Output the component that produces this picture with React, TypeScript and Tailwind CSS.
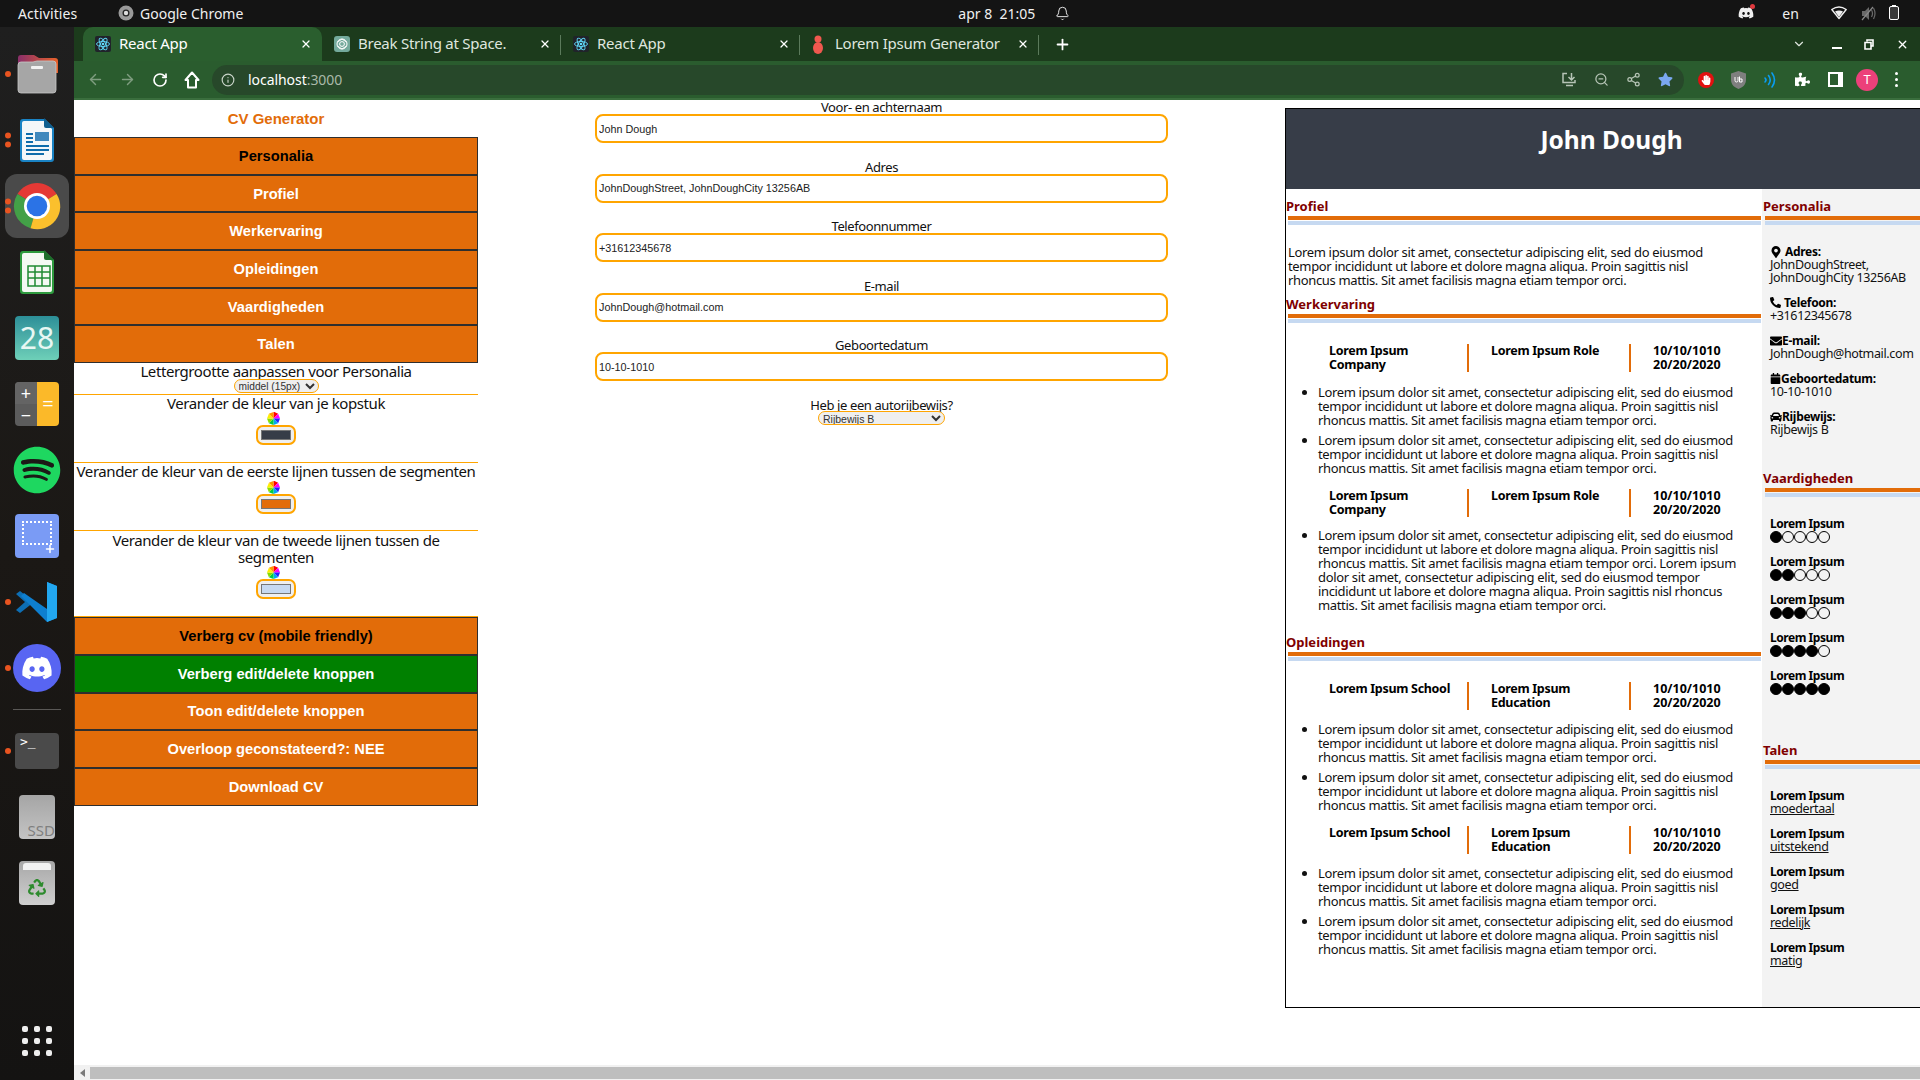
import React from "react";
import { FaMapMarkerAlt, FaPhoneAlt, FaEnvelope, FaCalendar, FaCar, FaDiscord, FaSpotify, FaRecycle, FaPuzzlePiece, FaStar, FaHandPaper } from "react-icons/fa";
import { Info, RotateCw, ArrowLeft, ArrowRight, ZoomOut, Share2, ChevronDown, Plus, X, Bell } from "lucide-react";

const LOREM = "Lorem ipsum dolor sit amet, consectetur adipiscing elit, sed do eiusmod tempor incididunt ut labore et dolore magna aliqua. Proin sagittis nisl rhoncus mattis. Sit amet facilisis magna etiam tempor orci.";

function ReactFav() {
  return (
    <svg width="16" height="16" viewBox="0 0 16 16" className="shrink-0">
      <rect width="16" height="16" rx="2" fill="#20232a" />
      <g fill="none" stroke="#61dafb" strokeWidth="0.9">
        <ellipse cx="8" cy="8" rx="6.500" ry="2.500" />
        <ellipse cx="8" cy="8" rx="6.500" ry="2.500" transform="rotate(60 8 8)" />
        <ellipse cx="8" cy="8" rx="6.500" ry="2.500" transform="rotate(120 8 8)" />
      </g>
      <circle cx="8" cy="8" r="1.3" fill="#61dafb" />
    </svg>
  );
}
function GptFav() {
  return (
    <svg width="16" height="16" viewBox="0 0 16 16" className="shrink-0">
      <rect width="16" height="16" rx="3" fill="#74aa9c" />
      <g fill="none" stroke="#fff" strokeWidth="1">
        <circle cx="8" cy="8" r="5" />
        <circle cx="8" cy="8" r="2.4" />
        <path d="M3.5 6 8 3l4.500 3M12.500 10 8 13l-4.500-3" />
      </g>
    </svg>
  );
}
function LoremFav() {
  return (
    <svg width="12" height="22" viewBox="0 0 12 22" className="mr-[3px] shrink-0">
      <circle cx="6" cy="6" r="3.500" fill="#f0584f" />
      <ellipse cx="6" cy="15" rx="5" ry="6" fill="#f0584f" />
    </svg>
  );
}

function Tab({ icon, title, active, sep }: { icon: React.ReactNode; title: string; active?: boolean; sep?: boolean }) {
  return (
    <div className={`relative flex h-[34px] w-[239px] shrink-0 items-center pl-[12px] pr-[10px] ${active ? "rounded-t-[10px] bg-[#2a5e2e]" : ""}`}>
      {icon}
      <span className={`ml-[8px] flex-1 truncate pb-[2px] text-[15px] tracking-[-0.25px] ${active ? "text-white" : "text-[#dfe6df]"}`}>{title}</span>
      <X size={12} strokeWidth={2.5} className="shrink-0 text-white" />
      {sep && <span className="absolute right-0 top-[8px] h-[20px] w-px bg-[#5b7a5b]" />}
    </div>
  );
}

function Dock() {
  const Slot = ({ children, dots = 0 }: { children: React.ReactNode; dots?: number }) => (
    <div className="relative flex h-[66px] w-full shrink-0 items-center justify-center">
      {dots > 0 && (
        <div className="absolute left-[5px] top-1/2 flex -translate-y-1/2 flex-col gap-[3px]">
          {Array.from({ length: dots }).map((_, i) => (
            <span key={i} className="h-[6px] w-[6px] rounded-full bg-[#e95420]" />
          ))}
        </div>
      )}
      {children}
    </div>
  );
  return (
    <div className="flex w-[74px] shrink-0 flex-col items-center bg-gradient-to-b from-[#1f1f1f] via-[#1b1815] to-[#141312] pt-[14px]">
      <Slot dots={1}>
        <svg width="46" height="42" viewBox="0 0 46 42">
          <defs>
            <linearGradient id="folderTop" x1="0" y1="0" x2="1" y2="0">
              <stop offset="0" stopColor="#8a2f6a" />
              <stop offset="1" stopColor="#e8622a" />
            </linearGradient>
          </defs>
          <path d="M4 5a3 3 0 0 1 3-3h13l5 3h16a3 3 0 0 1 3 3v12H4z" fill="url(#folderTop)" />
          <path d="M4 12a3 3 0 0 1 3-3h12l4-1h16a3 3 0 0 1 3 3v26a3 3 0 0 1-3 3H7a3 3 0 0 1-3-3z" fill="#a6a6a6" stroke="#c8c8c8" strokeWidth="0.8" />
          <rect x="17" y="13" width="12" height="3" rx="1" fill="#f2f2f2" />
        </svg>
      </Slot>
      <Slot dots={2}>
        <svg width="44" height="46" viewBox="0 0 44 46">
          <path d="M5 5a3 3 0 0 1 3-3h22l9 9v31a3 3 0 0 1-3 3H8a3 3 0 0 1-3-3z" fill="#1a83c4" />
          <path d="M7 6a2 2 0 0 1 2-2h20l8 8v29a2 2 0 0 1-2 2H9a2 2 0 0 1-2-2z" fill="#f4f7f9" />
          <path d="M29 1l10 10h-8a2 2 0 0 1-2-2z" fill="#0f5f90" />
          <rect x="20" y="15" width="14" height="9" fill="#3f88bd" />
          <g fill="#0f6cab">
            <rect x="11" y="16" width="7" height="2" />
            <rect x="11" y="20" width="7" height="2" />
            <rect x="11" y="24" width="7" height="2" />
            <rect x="11" y="28" width="23" height="2" />
            <rect x="11" y="32" width="23" height="2" />
            <rect x="11" y="36" width="18" height="2" />
          </g>
        </svg>
      </Slot>
      <Slot dots={2}>
        <div className="flex h-[64px] w-[64px] items-center justify-center rounded-[12px] bg-[#4a4a4a]">
          <svg width="52" height="52" viewBox="0 0 48 48">
            <path d="M24 24 6 13A21 21 0 0 1 42 13z" fill="#e53935" />
            <path d="M24 24 6 13A21 21 0 0 0 18 44.500z" fill="#43a047" />
            <path d="M24 24 42 13A21 21 0 0 1 18 44.500z" fill="#fbc02d" />
            <circle cx="24" cy="24" r="12" fill="#fff" />
            <circle cx="24" cy="24" r="9.500" fill="#2b73e6" />
          </svg>
        </div>
      </Slot>
      <Slot>
        <svg width="44" height="46" viewBox="0 0 44 46">
          <path d="M5 5a3 3 0 0 1 3-3h22l9 9v31a3 3 0 0 1-3 3H8a3 3 0 0 1-3-3z" fill="#2e9a3e" />
          <path d="M7 6a2 2 0 0 1 2-2h20l8 8v29a2 2 0 0 1-2 2H9a2 2 0 0 1-2-2z" fill="#f4f9f3" />
          <path d="M29 1l10 10h-8a2 2 0 0 1-2-2z" fill="#1c6e2a" />
          <g fill="none" stroke="#1f8a33" strokeWidth="1.500">
            <rect x="13" y="17" width="22" height="20" />
            <path d="M13 23h22M13 29h22M20 17v20M27 17v20" />
          </g>
        </svg>
      </Slot>
      <Slot>
        <div className="relative flex h-[44px] w-[44px] items-center justify-center rounded-[4px] bg-gradient-to-b from-[#2c8f98] to-[#6ed0b8] text-[30px] leading-none text-[#e8f7f3] [font-family:'Noto_Sans',sans-serif]">
          28
        </div>
      </Slot>
      <Slot>
        <div className="flex h-[44px] w-[44px] overflow-hidden rounded-[4px]">
          <div className="flex w-1/2 flex-col bg-[#5c5c5c] text-center text-[18px] leading-[22px] text-white">
            <span className="h-[22px] bg-[#646464]">+</span>
            <span>−</span>
          </div>
          <div className="flex w-1/2 items-center justify-center bg-[#fbb929] text-[20px] text-white">=</div>
        </div>
      </Slot>
      <Slot>
        <FaSpotify size={48} className="text-[#1ed760]" />
      </Slot>
      <Slot>
        <div className="relative h-[44px] w-[44px] rounded-[4px] bg-[#7a9bf5]">
          <div className="absolute left-[7px] top-[7px] h-[24px] w-[30px] border-2 border-dotted border-white" />
          <Plus size={12} strokeWidth={3} className="absolute bottom-[3px] right-[3px] text-white" />
        </div>
      </Slot>
      <Slot dots={1}>
        <svg width="44" height="42" viewBox="0 0 44 42">
          <path d="M1 13 5 10 19 21 5 32 1 29l9-8z" fill="#0d6eb4" />
          <path d="M32 1 42 5v32l-10 4L6 15l3-3 23 16z" fill="#0e7fd0" />
          <path d="M32 1 42 5v32l-10 4z" fill="#22a7f0" />
        </svg>
      </Slot>
      <Slot dots={1}>
        <div className="flex h-[48px] w-[48px] items-center justify-center rounded-full bg-[#5865f2]">
          <FaDiscord size={32} className="text-white" />
        </div>
      </Slot>
      <div className="flex h-[17px] w-full shrink-0 items-center justify-center">
        <div className="h-px w-[48px] bg-[#5a5856]" />
      </div>
      <Slot dots={1}>
        <div className="relative h-[36px] w-[44px] rounded-[4px] bg-[#4a4a4a] pl-[5px] text-[13px] leading-[18px] text-white [font-family:'DejaVu_Sans_Mono',monospace]">
          &gt;_
        </div>
      </Slot>
      <Slot>
        <div className="flex h-[44px] w-[36px] items-end justify-end overflow-hidden rounded-[4px] bg-gradient-to-b from-[#a5a5a5] to-[#c4c4c4] text-[15px] leading-[18px] text-[#7f7f7f]">
          SSD
        </div>
      </Slot>
      <Slot>
        <div className="flex h-[44px] w-[36px] flex-col items-center rounded-[4px] bg-gradient-to-b from-[#a8a8a8] to-[#cfcfcf] pt-[2px]">
          <div className="h-[7px] w-[28px] rounded-t-[3px] bg-[#f2f2f2]" />
          <FaRecycle size={18} className="mt-[9px] text-[#2e8b2e]" />
        </div>
      </Slot>
      <div className="mt-auto mb-[24px] grid grid-cols-3 gap-[6px]">
        {Array.from({ length: 9 }).map((_, i) => (
          <span key={i} className="h-[6px] w-[6px] rounded-[2px] bg-[#eeeeee]" />
        ))}
      </div>
    </div>
  );
}

function TopBar() {
  return (
    <div className="relative flex h-[27px] shrink-0 items-center bg-[#141414] pb-[1px] text-[14px] text-[#f0f0f0]">
      <span className="ml-[18px] w-[63px] whitespace-nowrap tracking-[0.1px]">Activities</span>
      <svg width="16" height="16" viewBox="0 0 16 16" className="ml-[37px]">
        <circle cx="8" cy="8" r="7.500" fill="#9a9a9a" />
        <circle cx="8" cy="8" r="3.500" fill="#222" />
        <circle cx="8" cy="8" r="2.200" fill="#ddd" />
      </svg>
      <span className="ml-[6px]">Google Chrome</span>
      <span className="ml-[715px] w-[76px] whitespace-nowrap">apr 8&nbsp; 21:05</span>
      <Bell size={15} strokeWidth={1.500} className="ml-[21px]" />
      <div className="relative ml-[668px]">
        <FaDiscord size={16} />
        <span className="absolute -right-[1px] -top-[1px] h-[5px] w-[5px] rounded-full bg-[#e0393e]" />
      </div>
      <span className="ml-[28px]">en</span>
      <svg width="16" height="14" viewBox="0 0 16 14" className="ml-[32px]">
        <path d="M.8 3.500Q8-1.500 15.200 3.500L8 12.500z" fill="none" stroke="#f0f0f0" strokeWidth="1.400" strokeLinejoin="round" />
        <path d="M4 5.500Q8 3.500 12 5.500L8 11z" fill="#f0f0f0" />
      </svg>
      <svg width="15" height="15" viewBox="0 0 15 15" className="ml-[14px]">
        <path d="M1 5h3l4-4v13l-4-4H1z" fill="#6a6a6a" />
        <path d="M10.500 4q2 3.500 0 7M12.500 2q3 5.500 0 11" fill="none" stroke="#6a6a6a" strokeWidth="1.200" />
        <path d="M1 14 12 1" stroke="#8a8a8a" strokeWidth="1.200" />
      </svg>
      <div className="relative ml-[13px] h-[14px] w-[10px] rounded-[2px] border border-white bg-[#3a3a3a]">
        <span className="absolute -top-[2px] left-[2px] h-[1px] w-[4px] bg-white" />
      </div>
    </div>
  );
}

function Toolbar() {
  return (
    <div className="flex h-[39px] shrink-0 items-center border-b-2 border-[#3a6e3d] bg-[#2a5c2e]">
      <ArrowLeft size={17} className="ml-[13px] text-[#7f9d80]" />
      <ArrowRight size={17} className="ml-[15px] text-[#7f9d80]" />
      <RotateCw size={16} strokeWidth={2.500} className="ml-[16px] text-white" />
      <svg width="16" height="18" viewBox="0 0 16 18" className="ml-[16px]">
        <path d="M8 1.500 1.500 9H4v7.500h8V9h2.500z" fill="none" stroke="#fff" strokeWidth="2" strokeLinejoin="round" />
      </svg>
      <div className="ml-[12px] flex h-[30px] w-[1472px] items-center rounded-full bg-[#27482a] pl-[9px]">
        <Info size={14} className="text-[#c9d4c9]" />
        <span className="ml-[13px] pb-[1px] text-[14px] tracking-[-0.05px] text-white">
          localhost<span className="text-[#a9b9a9]">:3000</span>
        </span>
        <svg width="15" height="15" viewBox="0 0 15 15" className="ml-auto">
          <path d="M5 1.500H1v9h12V8M9.500 1v6.500M6.500 5l3 3 3-3M4 13.500h7" fill="none" stroke="#b6c4b6" strokeWidth="1.500" />
        </svg>
        <ZoomOut size={15} className="ml-[17px] text-[#b6c4b6]" />
        <Share2 size={15} className="ml-[17px] text-[#b6c4b6]" />
        <FaStar size={15} className="ml-[17px] mr-[11px] text-[#7aa7f0]" />
      </div>
      <div className="ml-[14px] flex h-[16px] w-[16px] items-center justify-center rounded-full bg-[#e21010]">
        <FaHandPaper size={10} className="text-white" />
      </div>
      <svg width="15" height="18" viewBox="0 0 15 18" className="ml-[17px]">
        <path d="M7.500 0 15 2.500V9c0 4.500-3.500 7.500-7.500 9C3.500 16.500 0 13.500 0 9V2.500z" fill="#7f7f7f" />
        <path d="M4 6v3.500a1.500 1.500 0 0 0 3 0V6M8.500 5.500v5.500M8.500 8h2.500v3H8.500" fill="none" stroke="#fff" strokeWidth="1" />
      </svg>
      <svg width="14" height="18" viewBox="0 0 14 18" className="ml-[17px]">
        <g fill="none" stroke="#0a9cf0" strokeWidth="1.600" strokeLinecap="round">
          <path d="M2 7q2 2 0 4" />
          <path d="M5.500 4.500q3.500 4.500 0 9" />
          <path d="M9 2q5 7 0 14" />
        </g>
      </svg>
      <FaPuzzlePiece size={15} className="ml-[18px] text-white" />
      <div className="ml-[18px] flex h-[15px] w-[15px] justify-end border-2 border-white">
        <span className="h-full w-[3px] bg-white" />
      </div>
      <div className="ml-[13px] flex h-[22px] w-[22px] items-center justify-center rounded-full bg-[#ec407a] text-[13px] text-white">T</div>
      <div className="ml-[17px] flex flex-col gap-[3px]">
        <span className="h-[3px] w-[3px] rounded-full bg-white" />
        <span className="h-[3px] w-[3px] rounded-full bg-white" />
        <span className="h-[3px] w-[3px] rounded-full bg-white" />
      </div>
    </div>
  );
}

function SideButton({ label, dark, green }: { label: string; dark?: boolean; green?: boolean }) {
  return (
    <div className={`flex h-[37.7px] items-center justify-center border border-[#2e2e2e] text-[14.700px] font-bold ${green ? "bg-[#008000]" : "bg-[#e26c09]"} ${dark ? "text-black" : "text-white"} [font-family:'Liberation_Sans',sans-serif]`}>
      {label}
    </div>
  );
}

function ColorPick({ color, className = "" }: { color: string; className?: string }) {
  return (
    <div className={`flex flex-col items-center ${className}`}>
      <svg width="13" height="13" viewBox="0 0 14 14" className="-ml-[6px]">
        <path d="M7 7V0h1l4 2z" fill="#ff0000" />
        <path d="M7 7l5-5 2 5z" fill="#ff00ff" />
        <path d="M7 7h7l-2 5z" fill="#2222ff" />
        <path d="M7 7l5 5-5 2z" fill="#00aaee" />
        <path d="M7 7v7l-5-2z" fill="#00cc44" />
        <path d="M7 7l-5 5-2-5z" fill="#88dd00" />
        <path d="M7 7H0l2-5z" fill="#ffee00" />
        <path d="M7 7 2 2l5-2z" fill="#ff9900" />
      </svg>
      <div className="flex h-[20px] w-[40px] items-center justify-center rounded-[7px] border-2 border-[#ffa500] bg-[#efefef]">
        <div className="h-[10px] w-[30px] border border-[#767676]" style={{ backgroundColor: color }} />
      </div>
    </div>
  );
}

function LeftPanel() {
  const label = "text-center text-[15px] leading-[17px] tracking-[-0.42px] text-[#111] [font-family:'Noto_Sans',sans-serif]";
  return (
    <div className="w-[404px] shrink-0">
      <div className="flex h-[37px] items-center justify-center pt-[1px] text-[15px] font-bold text-[#e26c09] [font-family:'Liberation_Sans',sans-serif]">CV Generator</div>
      <SideButton label="Personalia" dark />
      <SideButton label="Profiel" />
      <SideButton label="Werkervaring" />
      <SideButton label="Opleidingen" />
      <SideButton label="Vaardigheden" />
      <SideButton label="Talen" />
      <div className="flex h-[32px] flex-col items-center border-b border-[#ffa500]">
        <div className={label}>Lettergrootte aanpassen voor Personalia</div>
        <select defaultValue="m" className="-mt-[1px] h-[14px] w-[85px] rounded-full border border-[#ffa500] bg-[#efefef] text-[10.200px] leading-[12px] text-[#333] [font-family:'Liberation_Sans',sans-serif]">
          <option value="m">middel (15px)</option>
        </select>
      </div>
      <div className="flex h-[68px] flex-col items-center border-b border-[#ffa500]">
        <div className={label}>Verander de kleur van je kopstuk</div>
        <ColorPick color="#373d48" />
      </div>
      <div className="flex h-[68px] flex-col items-center border-b border-[#ffa500]">
        <div className={label}>Verander de kleur van de eerste lijnen tussen de segmenten</div>
        <ColorPick color="#e26c09" className="mt-[1px]" />
      </div>
      <div className="flex h-[86px] flex-col items-center border-b border-[#ffa500] pt-[1px]">
        <div className={label}>Verander de kleur van de tweede lijnen tussen de<br />segmenten</div>
        <ColorPick color="#c6d9f1" />
      </div>
      <SideButton label="Verberg cv (mobile friendly)" dark />
      <SideButton label="Verberg edit/delete knoppen" green />
      <SideButton label="Toon edit/delete knoppen" />
      <SideButton label="Overloop geconstateerd?: NEE" />
      <SideButton label="Download CV" />
    </div>
  );
}

const formLabel = "h-[14px] text-center text-[13px] leading-[14px] tracking-[-0.4px] text-[#111] [font-family:'Noto_Sans',sans-serif]";

function Field({ label, value }: { label: string; value: string }) {
  return (
    <div className="mb-[16.500px] flex flex-col items-center">
      <div className={formLabel}>{label}</div>
      <input readOnly value={value} className="h-[29px] w-full rounded-[8px] border-2 border-[#ffa500] px-[2px] text-[10.800px] text-[#222] [font-family:'Liberation_Sans',sans-serif]" />
    </div>
  );
}

function FormPanel() {
  return (
    <div className="ml-[117px] w-[573px] shrink-0">
      <Field label="Voor- en achternaam" value="John Dough" />
      <Field label="Adres" value="JohnDoughStreet, JohnDoughCity 13256AB" />
      <Field label="Telefoonnummer" value="+31612345678" />
      <Field label="E-mail" value="JohnDough@hotmail.com" />
      <Field label="Geboortedatum" value="10-10-1010" />
      <div className="flex flex-col items-center">
        <div className={formLabel}>Heb je een autorijbewijs?</div>
        <select defaultValue="b" className="-mt-[1px] h-[14px] w-[127px] rounded-full border border-[#ffa500] bg-[#efefef] text-[10.500px] leading-[12px] text-[#333] [font-family:'Liberation_Sans',sans-serif]">
          <option value="b">Rijbewijs B</option>
        </select>
      </div>
    </div>
  );
}

function SectionHead({ title, className = "" }: { title: string; className?: string }) {
  return (
    <div className={className}>
      <div className="h-[14px] text-[13px] font-bold leading-[14px] text-[#800000]">{title}</div>
      <div className="ml-[2px] mt-[3px] h-[4px] bg-[#e26c09]" />
      <div className="ml-[2px] mt-[1px] h-[4px] bg-[#c6d9f1]" />
    </div>
  );
}

function Entry({ a, b, className = "" }: { a: React.ReactNode; b: React.ReactNode; className?: string }) {
  return (
    <div className={`ml-[19px] flex h-[28px] text-[12.500px] font-bold leading-[14px] text-black ${className}`}>
      <div className="w-[162px] pl-[24px] tracking-[-0.3px]">{a}</div>
      <div className="w-[162px] border-l-2 border-[#e26c09] pl-[22px] tracking-[-0.3px]">{b}</div>
      <div className="w-[130px] border-l-2 border-[#e26c09] pl-[22px]">10/10/1010<br />20/20/2020</div>
    </div>
  );
}

function Bullets({ items, className = "" }: { items: string[]; className?: string }) {
  return (
    <ul className={`ml-[32px] mr-[20px] flex list-disc flex-col gap-[6px] text-[13px] leading-[14px] tracking-[-0.34px] text-[#111] ${className}`}>
      {items.map((t, i) => (
        <li key={i}>{t}</li>
      ))}
    </ul>
  );
}

function Info2({ icon, label, children }: { icon: React.ReactNode; label: string; children: React.ReactNode }) {
  return (
    <div className="mb-[12px] text-[12.500px] leading-[13px] tracking-[-0.36px] text-[#111]">
      <div className="flex items-center text-[12px] font-bold tracking-[-0.3px] text-black">
        {icon}
        {label}
      </div>
      {children}
    </div>
  );
}

function Skill({ n }: { n: number }) {
  return (
    <div className="mb-[12px] text-[12px] font-bold leading-[13px] tracking-[-0.45px] text-black">
      Lorem Ipsum
      <div className="flex h-[13px] items-center">
        {[0, 1, 2, 3, 4].map((i) => (
          <span key={i} className={`h-[12px] w-[12px] rounded-full border border-black ${i < n ? "bg-black" : "bg-transparent"}`} />
        ))}
      </div>
    </div>
  );
}

function Lang({ v }: { v: string }) {
  return (
    <div className="mb-[12px] text-[12.500px] leading-[13px] tracking-[-0.36px] text-[#111]">
      <div className="text-[12px] font-bold tracking-[-0.45px] text-black">Lorem Ipsum</div>
      <div className="underline">{v}</div>
    </div>
  );
}

function CV() {
  return (
    <div className="ml-[117px] mt-[8px] flex h-[900px] w-[652px] shrink-0 flex-col border-y border-l border-black [font-family:'Noto_Sans',sans-serif]">
      <div className="h-[80px] shrink-0 bg-[#373d48] pt-[14px] text-center text-[24.500px] font-bold leading-[34px] text-white">John Dough</div>
      <div className="flex min-h-0 flex-1">
        <div className="w-[476px] shrink-0 pr-[1px]">
          <SectionHead title="Profiel" className="mt-[10px]" />
          <p className="ml-[2px] mr-[30px] mt-[20px] text-[13px] leading-[14px] tracking-[-0.34px] text-[#111]">{LOREM}</p>
          <SectionHead title="Werkervaring" className="mt-[10px]" />
          <Entry className="mt-[21px]" a={<>Lorem Ipsum<br />Company</>} b="Lorem Ipsum Role" />
          <Bullets className="mt-[13px]" items={[LOREM, LOREM]} />
          <Entry className="mt-[14px]" a={<>Lorem Ipsum<br />Company</>} b="Lorem Ipsum Role" />
          <Bullets className="mt-[11px]" items={[LOREM + " " + LOREM]} />
          <SectionHead title="Opleidingen" className="mt-[23px]" />
          <Entry className="mt-[21px]" a="Lorem Ipsum School" b={<>Lorem Ipsum<br />Education</>} />
          <Bullets className="mt-[12px]" items={[LOREM, LOREM]} />
          <Entry className="mt-[14px]" a="Lorem Ipsum School" b={<>Lorem Ipsum<br />Education</>} />
          <Bullets className="mt-[12px]" items={[LOREM, LOREM]} />
        </div>
        <div className="min-w-0 flex-1 bg-[#f3f3f3] pl-[1px]">
          <SectionHead title="Personalia" className="mt-[10px]" />
          <div className="ml-[7px] mt-[20px]">
            <Info2 icon={<FaMapMarkerAlt size={12} className="mr-[3px]" />} label="Adres:">JohnDoughStreet,<br />JohnDoughCity 13256AB</Info2>
            <Info2 icon={<FaPhoneAlt size={11} className="mr-[3px]" />} label="Telefoon:">+31612345678</Info2>
            <Info2 icon={<FaEnvelope size={12} />} label="E-mail:">JohnDough@hotmail.com</Info2>
            <Info2 icon={<FaCalendar size={11} />} label="Geboortedatum:">10-10-1010</Info2>
            <Info2 icon={<FaCar size={12} />} label="Rijbewijs:">Rijbewijs B</Info2>
          </div>
          <SectionHead title="Vaardigheden" className="mt-[35px]" />
          <div className="ml-[7px] mt-[20px]">
            {[1, 2, 3, 4, 5].map((n) => <Skill key={n} n={n} />)}
          </div>
          <SectionHead title="Talen" className="mt-[48px]" />
          <div className="ml-[7px] mt-[20px]">
            {["moedertaal", "uitstekend", "goed", "redelijk", "matig"].map((v) => <Lang key={v} v={v} />)}
          </div>
        </div>
      </div>
    </div>
  );
}

export default function App() {
  return (
    <div className="flex h-[1080px] w-[1920px] flex-col overflow-hidden bg-white [font-family:'Noto_Sans',sans-serif]">
      <TopBar />
      <div className="flex min-h-0 flex-1">
        <Dock />
        <div className="flex min-w-0 flex-1 flex-col">
          <div className="flex h-[34px] shrink-0 items-center bg-[#1c3b1c] pl-[9px]">
            <Tab active icon={<ReactFav />} title="React App" />
            <Tab sep icon={<GptFav />} title="Break String at Space." />
            <Tab sep icon={<ReactFav />} title="React App" />
            <Tab sep icon={<LoremFav />} title="Lorem Ipsum Generator" />
            <Plus size={17} strokeWidth={2.500} className="ml-[15px] text-white" />
            <ChevronDown size={14} className="ml-[721px] text-[#dfe6df]" />
            <span className="ml-[26px] mt-[8px] h-[2px] w-[10px] bg-white" />
            <svg width="10" height="11" viewBox="0 0 10 11" className="ml-[22px]">
              <path d="M3 2.500V1h6v6H7.500M1 3.500h6V10H1z" fill="none" stroke="#fff" strokeWidth="1.600" />
            </svg>
            <X size={13} strokeWidth={2.500} className="ml-[22px] text-white" />
          </div>
          <Toolbar />
          <div className="flex min-h-0 flex-1 overflow-hidden">
            <LeftPanel />
            <FormPanel />
            <CV />
          </div>
          <div className="flex h-[15px] shrink-0 items-center bg-[#f1f1f1]">
            <span className="ml-[6px] h-0 w-0 border-y-[4px] border-r-[5px] border-y-transparent border-r-[#7a7a7a]" />
            <div className="ml-[5px] h-[12px] flex-1 bg-[#bebebe]" />
          </div>
        </div>
      </div>
    </div>
  );
}
